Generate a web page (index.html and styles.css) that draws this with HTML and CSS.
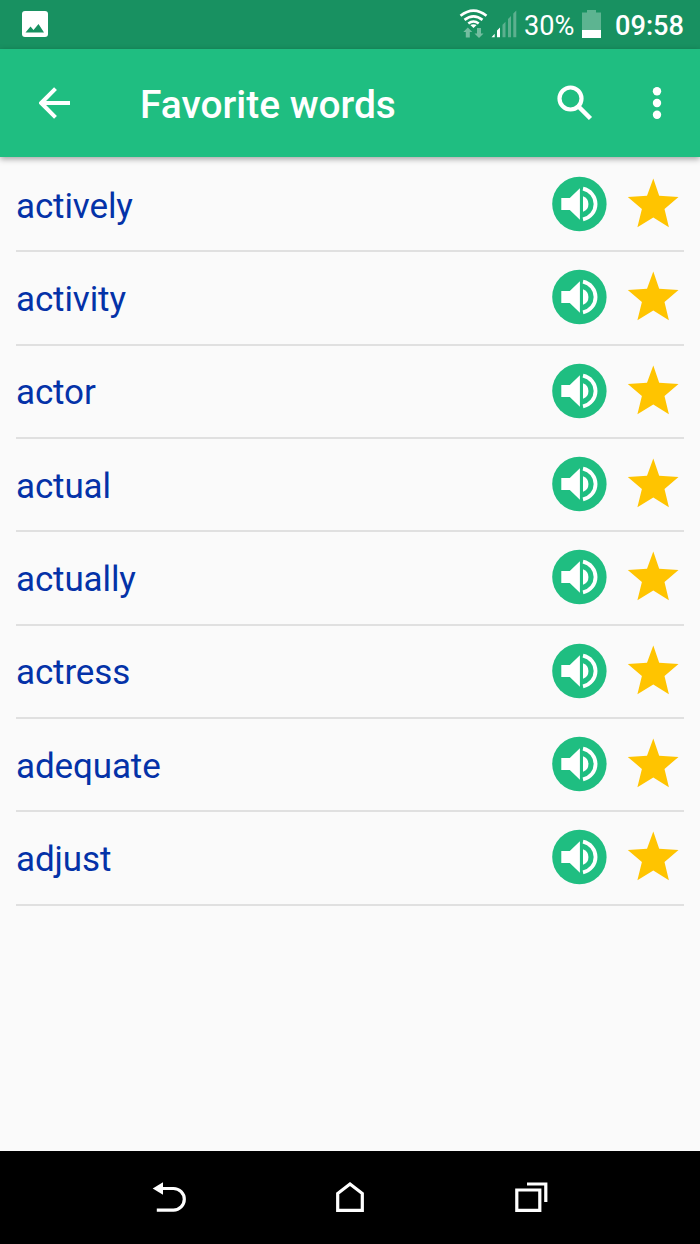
FILE: index.html
```html
<!DOCTYPE html>
<html lang="en">
<head>
<meta charset="utf-8">
<title>Favorite words</title>
<link rel="stylesheet" href="styles.css">
</head>
<body>
<svg class="defs" aria-hidden="true">
  <symbol id="speaker" viewBox="0 0 56 56">
    <circle cx="28.400" cy="28" r="27.200" fill="#1fbe81"/>
    <path d="M10.300 22h8.500L28.900 12.200v31.600L18.800 34h-8.500z" fill="#fff"/>
    <path d="M32 20.200a8.300 8.300 0 0 1 0 15.600z" fill="#fff"/>
    <path d="M32 12.700a15.600 15.600 0 0 1 0 30.600" fill="none" stroke="#fff" stroke-width="3.800"/>
  </symbol>
  <symbol id="star" viewBox="0 0 52 50">
    <path d="M26.300 .5L32.200 17.800 51.500 18.900 37.500 30.900 41.900 49.300 26.300 39.600 10.400 49.300 14.900 30.900.8 18.900 20 17.800z" fill="#ffc400"/>
  </symbol>
</svg>
<div class="screen">
  <header class="status">
    <svg class="picture" viewBox="0 0 26 26"><rect width="26" height="26" rx="3" fill="#fff"/><path d="M3.500 21.500l5-6 3 3.500 5-6 5.500 8.500z" fill="#189161"/></svg>
    <svg class="wifi" viewBox="0 0 30 30">
      <g fill="none" stroke="#fff" stroke-width="2.600"><path d="M1.500 6.800q13-10.400 26 0M5.500 10.900q9-7 18 0M9.300 14.500q5.200-4 10.400 0"/></g>
      <path d="M11.300 16q3.200-1.600 6.400 0l-3.200 3z" fill="#fff"/>
      <path d="M8.800 18.500l4.500 4.500h-2.500v5.500H6.800V23H4.300zM20 29l-4.500-4.500H18V19h4v5.500h2.500z" fill="#74bda0"/>
    </svg>
    <svg class="signal" viewBox="0 0 26 28">
      <path d="M.5 27.200l3.200-3.500v3.500zM6 20.500l3-3v9.700H6z" fill="#fff"/>
      <path d="M11.500 14.800l3-3v15.400h-3zM17 9l3-3v21.200h-3zM22.300 3.500l3-3v26.700h-3z" fill="#5db08f"/>
    </svg>
    <span class="percent">30%</span>
    <svg class="battery" viewBox="0 0 19 28"><path d="M0 2.500h5V0h9v2.500h5V28H0z" fill="#5db491"/><path d="M0 20h19v8H0z" fill="#fff"/></svg>
    <span class="clock">09:58</span>
  </header>
  <nav class="appbar">
    <svg class="back" viewBox="0 0 32 32"><path d="M31 16H3M16.500 1.700L2.200 16l14.300 14.300" fill="none" stroke="#fff" stroke-width="4"/></svg>
    <h1 class="title">Favorite words</h1>
    <svg class="search" viewBox="0 0 36 36"><circle cx="13.500" cy="13.500" r="11" fill="none" stroke="#fff" stroke-width="4.200"/><path d="M22 22l11.500 11.500" stroke="#fff" stroke-width="4.500"/></svg>
    <svg class="more" viewBox="0 0 10 34"><g fill="#fff"><circle cx="5" cy="5.300" r="4.200"/><circle cx="5" cy="17" r="4.200"/><circle cx="5" cy="28.700" r="4.200"/></g></svg>
  </nav>
  <main class="list">
    <div class="row"><span class="word">actively</span><svg class="speak"><use href="#speaker"/></svg><svg class="fav"><use href="#star"/></svg></div>
    <div class="row"><span class="word">activity</span><svg class="speak"><use href="#speaker"/></svg><svg class="fav"><use href="#star"/></svg></div>
    <div class="row"><span class="word">actor</span><svg class="speak"><use href="#speaker"/></svg><svg class="fav"><use href="#star"/></svg></div>
    <div class="row"><span class="word">actual</span><svg class="speak"><use href="#speaker"/></svg><svg class="fav"><use href="#star"/></svg></div>
    <div class="row"><span class="word">actually</span><svg class="speak"><use href="#speaker"/></svg><svg class="fav"><use href="#star"/></svg></div>
    <div class="row"><span class="word">actress</span><svg class="speak"><use href="#speaker"/></svg><svg class="fav"><use href="#star"/></svg></div>
    <div class="row"><span class="word">adequate</span><svg class="speak"><use href="#speaker"/></svg><svg class="fav"><use href="#star"/></svg></div>
    <div class="row"><span class="word">adjust</span><svg class="speak"><use href="#speaker"/></svg><svg class="fav"><use href="#star"/></svg></div>
  </main>
  <footer class="navbar">
    <svg class="key" viewBox="0 0 36 36"><path d="M11 8.500h11.500a10.800 10.800 0 0 1 0 21.600H5.800" fill="none" stroke="#fff" stroke-width="3.200"/><path d="M1.700 8.500L12 2.200v12.600z" fill="#fff"/></svg>
    <svg class="key" viewBox="0 0 36 36"><path d="M5.700 30.400V13.500L18 4l12.300 9.500v16.900z" fill="none" stroke="#fff" stroke-width="3.200"/></svg>
    <svg class="key" viewBox="0 0 36 36"><path d="M3.800 10h23v20.400h-23zM14 4h18.800v18" fill="none" stroke="#fff" stroke-width="3.200"/></svg>
  </footer>
</div>
</body>
</html>
```
FILE: styles.css
```css
body {
  margin: 0;
  background: #fafafa;
  font-family: Roboto, sans-serif;
}

svg {
  display: block;
  flex: none;
}

.defs {
  position: absolute;
  width: 0;
  height: 0;
}

.screen {
  display: flex;
  flex-direction: column;
  width: 700px;
  height: 1244px;
  overflow: hidden;
}

.status {
  display: flex;
  align-items: center;
  box-sizing: border-box;
  height: 49px;
  padding: 0 14px 0 22px;
  background: #189161;
  color: #fff;
}

.picture {
  width: 26px;
  height: 26px;
  margin: 0 auto 1px 0;
}

.wifi {
  width: 30px;
  height: 30px;
  margin: 0 2px 1px 0;
}

.signal {
  width: 26px;
  height: 28px;
  margin: 0 7px 2px 0;
}

.percent {
  width: 52px;
  margin-right: 6px;
  padding-top: 2px;
  font-size: 27.2px;
  white-space: nowrap;
}

.battery {
  width: 19px;
  height: 28px;
  margin: 0 14px 1px 0;
}

.clock {
  width: 71px;
  padding-top: 2px;
  font-size: 27.2px;
  font-weight: 500;
}

.appbar {
  display: flex;
  align-items: center;
  box-sizing: border-box;
  height: 108px;
  padding: 0 38px 0 39px;
  background: #1fbe81;
  box-shadow: 0 2px 6px rgba(0, 0, 0, 0.36);
  color: #fff;
}

.back {
  width: 32px;
  height: 32px;
}

.title {
  margin: 3px auto 0 69px;
  font-size: 38.9px;
  font-weight: 500;
}

.search {
  width: 36px;
  height: 36px;
  margin-right: 59px;
}

.more {
  width: 10px;
  height: 34px;
}

.list {
  flex: 1;
  padding: 2.1px 16px 0;
}

.row {
  display: flex;
  align-items: center;
  box-sizing: border-box;
  height: 93.33px;
  padding-right: 5px;
  border-bottom: 2px solid #e0e0e0;
}

.word {
  margin-right: auto;
  padding-top: 3px;
  color: #0432a8;
  font-size: 35px;
  letter-spacing: -0.12px;
}

.speak {
  width: 56px;
  height: 56px;
  margin: 0 20px 1.4px 0;
}

.fav {
  width: 52px;
  height: 50px;
  margin-bottom: 3.6px;
}

.navbar {
  display: flex;
  align-items: center;
  justify-content: center;
  gap: 145px;
  height: 93px;
  background: #000;
}

.key {
  width: 36px;
  height: 36px;
}
```
